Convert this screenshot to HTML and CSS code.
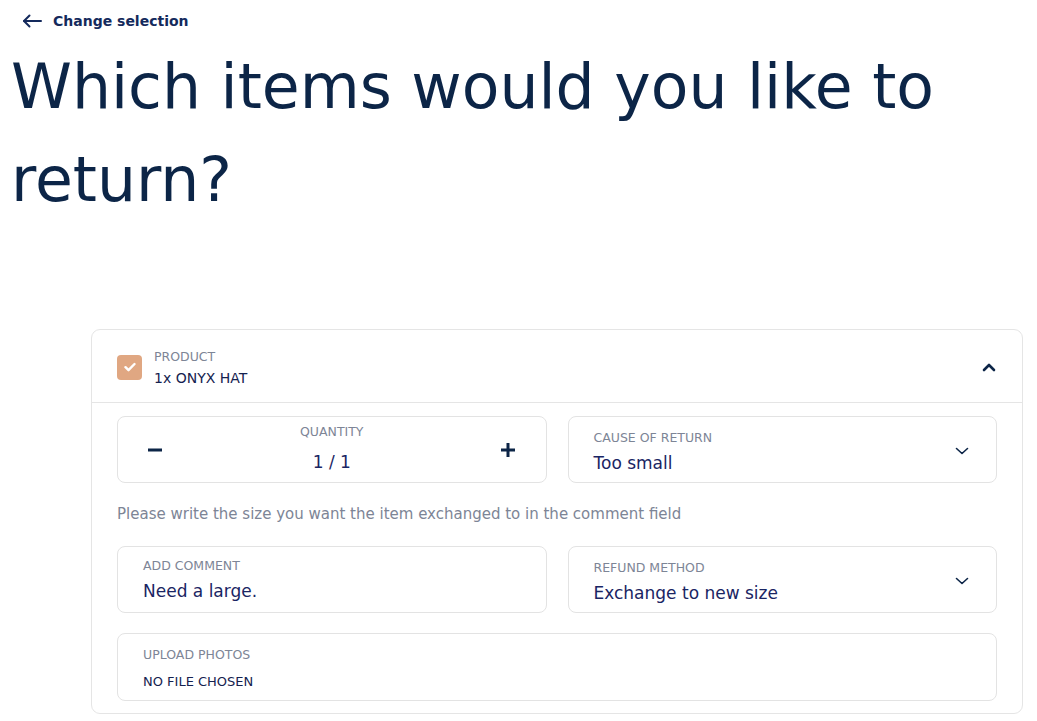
FILE: index.html
```html
<!DOCTYPE html>
<html lang="en">
<head>
<meta charset="utf-8">
<title>Return items</title>
<link rel="stylesheet" href="styles.css">
</head>
<body>
<div class="page">
  <a class="back" href="#">
    <svg class="back-icon" width="20" height="14" viewBox="0 0 20 14" fill="none" stroke="currentColor" stroke-width="2" stroke-linecap="round" stroke-linejoin="round"><path d="M19 7H2"/><path d="M7.5 1.5L2 7l5.5 5.5"/></svg>
    <span>Change selection</span>
  </a>
  <h1 class="title">Which items would you like to return?</h1>

  <section class="card">
    <header class="card-head">
      <span class="check">
        <svg width="12" height="10" viewBox="0 0 12 10" fill="none" stroke="#fff" stroke-width="2.4" stroke-linecap="round" stroke-linejoin="round"><path d="M1.5 5.2l3 3L10.5 2"/></svg>
      </span>
      <div class="prod">
        <div class="label">PRODUCT</div>
        <div class="prod-name">1x ONYX HAT</div>
      </div>
      <svg class="chev-up" width="14" height="9" viewBox="0 0 14 9" fill="none" stroke="currentColor" stroke-width="2.6" stroke-linecap="round" stroke-linejoin="round"><path d="M2 7l5-5 5 5"/></svg>
    </header>
    <div class="card-body">
      <div class="row">
        <div class="field qty">
          <span class="qbtn">
            <svg width="14" height="4" viewBox="0 0 14 4"><rect x="0" y="0.5" width="14" height="3" fill="currentColor"/></svg>
          </span>
          <div class="qmid">
            <div class="label">QUANTITY</div>
            <div class="value">1 / 1</div>
          </div>
          <span class="qbtn">
            <svg width="14" height="14" viewBox="0 0 14 14"><rect x="0" y="5.5" width="14" height="3" fill="currentColor"/><rect x="5.5" y="0" width="3" height="14" fill="currentColor"/></svg>
          </span>
        </div>
        <div class="field select">
          <div class="ftext">
            <div class="label">CAUSE OF RETURN</div>
            <div class="value">Too small</div>
          </div>
          <svg class="chev" width="14" height="8" viewBox="0 0 14 8" fill="none" stroke="currentColor" stroke-width="1.6" stroke-linecap="round" stroke-linejoin="round"><path d="M1.5 1.5L7 6.5l5.5-5"/></svg>
        </div>
      </div>
      <p class="hint">Please write the size you want the item exchanged to in the comment field</p>
      <div class="row">
        <div class="field text">
          <div class="ftext">
            <div class="label">ADD COMMENT</div>
            <div class="value">Need a large.</div>
          </div>
        </div>
        <div class="field select">
          <div class="ftext">
            <div class="label">REFUND METHOD</div>
            <div class="value">Exchange to new size</div>
          </div>
          <svg class="chev" width="14" height="8" viewBox="0 0 14 8" fill="none" stroke="currentColor" stroke-width="1.6" stroke-linecap="round" stroke-linejoin="round"><path d="M1.5 1.5L7 6.5l5.5-5"/></svg>
        </div>
      </div>
      <div class="field upload">
        <div class="ftext">
          <div class="label">UPLOAD PHOTOS</div>
          <div class="file">NO FILE CHOSEN</div>
        </div>
      </div>
    </div>
  </section>
</div>
</body>
</html>
```
FILE: styles.css
```css
* { box-sizing: border-box; }
html, body { margin: 0; padding: 0; background: #fff; }
body {
  font-family: "DejaVu Sans", "Open Sans", sans-serif;
  color: #0c2547;
}

.back {
  display: flex;
  align-items: center;
  gap: 11px;
  height: 41px;
  padding-left: 22px;
  color: #142a5c;
  text-decoration: none;
  font-size: 14px;
  font-weight: 700;
}
.back-icon { display: block; }

.title {
  margin: 0;
  padding-left: 11px;
  font-size: 61.6px;
  line-height: 93px;
  font-weight: 400;
  color: #0c2547;
  width: 1000px;
}

.card {
  margin: 102px 0 0 91px;
  width: 932px;
  border: 1px solid #e5e5e5;
  border-radius: 9px;
}
.card-head {
  display: flex;
  align-items: center;
  height: 73px;
  padding: 0 26px 0 25px;
  border-bottom: 1px solid #e5e5e5;
}
.check {
  width: 25px;
  height: 25px;
  border-radius: 4px;
  background: #e0a782;
  display: flex;
  align-items: center;
  justify-content: center;
  margin-right: 12px;
  margin-top: 2px;
}
.prod { flex: 1; }
.label {
  font-size: 12.5px;
  color: #7d8596;
  line-height: 16px;
}
.prod-name {
  font-size: 14px;
  color: #15224f;
  margin-top: 5px;
}
.prod .label { margin-top: 3px; }
.chev-up { color: #0c2547; margin-top: 2px; }

.card-body { padding: 13px 25px 12px 25px; }
.row { display: grid; grid-template-columns: 1fr 1fr; gap: 21px; }
.field {
  border: 1px solid #e3e3e3;
  border-radius: 8px;
  height: 67px;
  display: flex;
  align-items: center;
}
.qty { justify-content: space-between; padding: 0 30px; }
.qbtn { color: #0c2547; display: flex; }
.qmid { text-align: center; }
.qmid .label { margin-top: -2px; }
.qmid .value { margin-top: 11px; }
.value {
  font-size: 17px;
  color: #1a2563;
  line-height: 22px;
  margin-top: 6px;
}
.ftext { margin-top: 4px; }
.select { padding: 0 27px 0 25px; justify-content: space-between; }
.text { padding: 0 25px; }
.text .value { margin-top: 6px; }
.text .ftext { margin-top: 0; }
.chev { color: #0c2547; margin-top: 2px; }

.hint {
  margin: 21px 0 22px 0;
  font-size: 15px;
  color: #7d8596;
  line-height: 20px;
}
.upload { margin-top: 20px; padding: 0 25px; height: 68px; }
.upload .ftext { margin-top: 2px; }
.file {
  font-size: 13px;
  color: #15224f;
  margin-top: 11px;
}
```
